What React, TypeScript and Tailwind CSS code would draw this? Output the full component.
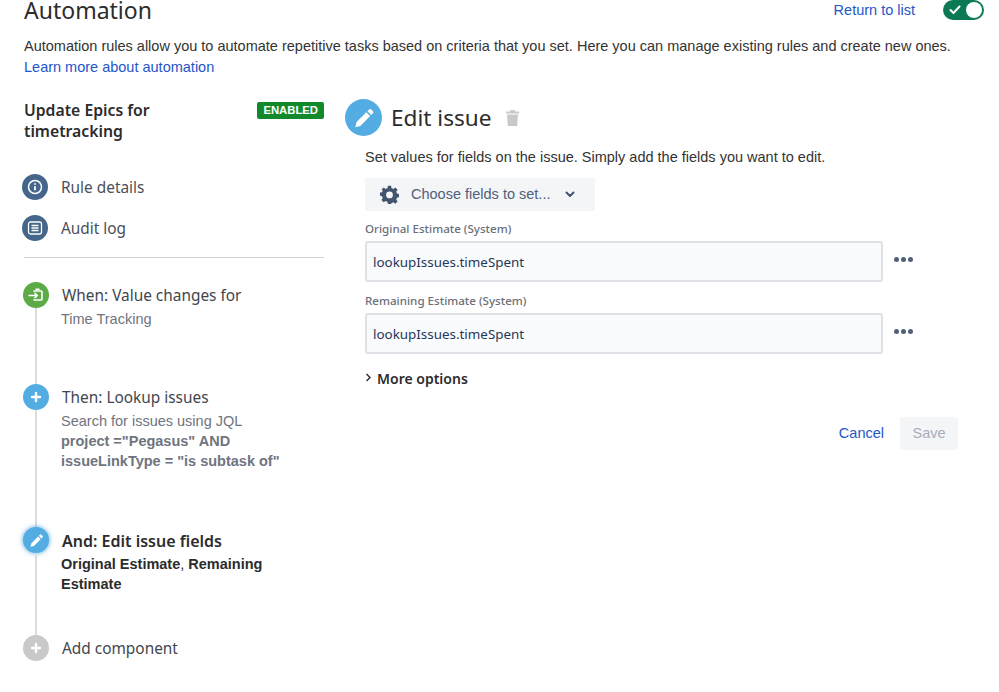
import React from "react";

const sans = "font-['Liberation_Sans',Arial,sans-serif]";
const head = "font-['Noto_Sans','Open_Sans',sans-serif]";

function Pencil({ size }: { size: number }) {
  return (
    <svg width={size} height={size} viewBox="0 0 24 24" fill="white">
      <path d="M17.6 2.6a1.6 1.6 0 0 1 2.2 0l2 2a1.6 1.6 0 0 1 0 2.2l-1.9 1.9-4.2-4.2zM14.5 5.7l4.2 4.2L8 20.6l-5.5 1.4L3.9 16.4z" />
    </svg>
  );
}

function Plus() {
  return (
    <svg width="12" height="12" viewBox="0 0 12 12" fill="none" stroke="white" strokeWidth="2.4" strokeLinecap="round">
      <path d="M6 2v8M2 6h8" />
    </svg>
  );
}

function Step({ color, icon, line, height, title, bold, children, glow }: { color: string; icon: React.ReactNode; line: boolean; height: string; title: string; bold?: boolean; children?: React.ReactNode; glow?: boolean }) {
  return (
    <div className={`flex ${height}`}>
      <div className="flex w-[26px] flex-col items-center">
        <div className={`flex h-[26px] w-[26px] shrink-0 items-center justify-center rounded-full ${color} ${glow ? "shadow-[0_0_5px_#4aa3df]" : ""}`}>{icon}</div>
        {line && <div className="w-[2px] flex-1 bg-[#dcdcdc]" />}
      </div>
      <div className="ml-[13px] min-w-0 flex-1">
        <div className={`${head} h-[26px] pt-[1px] leading-[26px] ${bold ? "text-[16px] font-semibold text-[#2c2c2c]" : "text-[15.4px] text-[#42464e]"}`}>{title}</div>
        {children && <div className={`${sans} -ml-[1px] mt-[1px] text-[14.5px] leading-[20px] text-[#6f7480]`}>{children}</div>}
      </div>
    </div>
  );
}

function Field({ label, top }: { label: string; top: string }) {
  return (
    <div className={top}>
      <div className={`${head} text-[11.6px] font-medium leading-[16px] text-[#6b6f78]`}>{label}</div>
      <div className="mt-[4px] flex items-center">
        <div className={`${head} flex h-[41px] w-[518px] items-center rounded-[3px] border-2 border-[#dfe1e6] bg-[#fafbfc] px-[6px] pt-[2px] text-[13.4px] text-[#253858]`}>lookupIssues.timeSpent</div>
        <div className="mb-[5px] ml-[11px] flex gap-[2px]">
          <span className="h-[5px] w-[5px] rounded-full bg-[#50607a]" />
          <span className="h-[5px] w-[5px] rounded-full bg-[#50607a]" />
          <span className="h-[5px] w-[5px] rounded-full bg-[#50607a]" />
        </div>
      </div>
    </div>
  );
}

function Side({ icon, label }: { icon: React.ReactNode; label: string }) {
  return (
    <div className="flex h-[26px] items-center">
      <div className="flex h-[26px] w-[26px] shrink-0 items-center justify-center rounded-full bg-[#45658a]">{icon}</div>
      <span className={`${head} ml-[13px] mt-[2px] text-[15.4px] text-[#4b4f57]`}>{label}</span>
    </div>
  );
}

export default function App() {
  return (
    <div className="h-[692px] w-[999px] overflow-hidden bg-white pl-[24px]">
      <div className="flex items-start">
        <h1 className={`${head} text-[23px] font-normal leading-[20px] text-[#2c2c2c]`}>Automation</h1>
        <a className={`${sans} ml-auto mt-[2px] text-[14.5px] leading-[16px] text-[#1f56c9]`}>Return to list</a>
        <div className="ml-[28px] mr-[15px] flex h-[20px] w-[41px] items-center justify-between rounded-full bg-[#0b7a54] pl-[6px] pr-[2px]">
          <svg width="12" height="10" viewBox="0 0 12 10" fill="none" stroke="white" strokeWidth="2" strokeLinecap="round" strokeLinejoin="round"><path d="M1.5 5l3 3 6-6.5" /></svg>
          <span className="h-[16px] w-[16px] rounded-full bg-white" />
        </div>
      </div>
      <p className={`${sans} mt-[16px] w-[960px] text-[14.5px] leading-[21px] text-[#333333]`}>
        Automation rules allow you to automate repetitive tasks based on criteria that you set. Here you can manage existing rules and create new ones.
        <br />
        <a className="text-[#1f56c9]">Learn more about automation</a>
      </p>
      <div className="mt-[22px] flex">
        <div className="w-[300px] shrink-0">
          <div className="flex items-start justify-between">
            <div className={`${head} w-[170px] text-[15.75px] font-semibold leading-[21px] text-[#2c2c2c]`}>Update Epics for timetracking</div>
            <span className={`${sans} mt-[2px] rounded-[2px] bg-[#128a2c] px-[6px] text-[11.3px] font-bold leading-[17px] text-white`}>ENABLED</span>
          </div>
          <div className="mt-[32px] -ml-[2px] flex flex-col gap-[15px]">
            <Side
              label="Rule details"
              icon={
                <svg width="16" height="16" viewBox="0 0 16 16" fill="none" stroke="white" strokeWidth="1.5">
                  <circle cx="8" cy="8" r="6.5" />
                  <path d="M8 7.2v4" strokeWidth="1.8" />
                  <path d="M8 4.2v1.6" strokeWidth="1.8" />
                </svg>
              }
            />
            <Side
              label="Audit log"
              icon={
                <svg width="16" height="16" viewBox="0 0 16 16" fill="none" stroke="white" strokeWidth="1.3">
                  <rect x="1.5" y="2" width="13" height="12" rx="2" />
                  <path d="M4.5 5.5h7M4.5 8h7M4.5 10.5h7" />
                </svg>
              }
            />
          </div>
          <hr className="mt-[16px] border-t border-[#d4d4d4]" />
          <div className="mt-[24px] -ml-[1px]">
            <Step
              color="bg-[#5cab47]"
              height="h-[102px]"
              line
              title="When: Value changes for"
              icon={
                <svg width="16" height="16" viewBox="0 0 16 16" fill="none" stroke="white" strokeWidth="1.6" strokeLinecap="round" strokeLinejoin="round">
                  <path d="M6 4h7a1 1 0 0 1 1 1v7a1 1 0 0 1-1 1H6M1 8.5h8M7 6.3L9.4 8.5 7 10.7M8 2.2h3" />
                </svg>
              }
            >
              Time Tracking
            </Step>
            <Step color="bg-[#54ade2]" height="h-[143px]" line title="Then: Lookup issues" icon={<Plus />}>
              Search for issues using JQL
              <br />
              <b>project ="Pegasus" AND</b>
              <br />
              <b>issueLinkType = "is subtask of"</b>
            </Step>
            <Step color="bg-[#54ade2]" height="h-[108px]" line glow bold title="And: Edit issue fields" icon={<Pencil size={15} />}>
              <span className="mt-[1px] block text-[#2c2c2c]">
                <b>Original Estimate</b>, <b>Remaining</b>
                <br />
                <b>Estimate</b>
              </span>
            </Step>
            <Step color="bg-[#c9c9c9]" height="h-[26px]" line={false} title="Add component" icon={<Plus />} />
          </div>
        </div>
        <div className="ml-[21px] flex-1">
          <div className="-mt-[1px] flex items-center">
            <div className="flex h-[37px] w-[37px] items-center justify-center rounded-full bg-[#54ade2]"><Pencil size={22} /></div>
            <h2 className={`${head} ml-[9px] text-[22.6px] font-normal leading-[37px] text-[#2c2c2c]`}>Edit issue</h2>
            <svg className="ml-[14px]" width="13" height="16" viewBox="0 0 13 16" fill="#c9c9c9">
              <path d="M4.5 0h4l.6 1.5H13V3.5H0V1.5h3.9zM1 4.5h11L11.2 16H1.8z" />
            </svg>
          </div>
          <div className="pl-[20px]">
            <p className={`${sans} mt-[11px] text-[14.5px] leading-[20px] text-[#333333]`}>Set values for fields on the issue. Simply add the fields you want to edit.</p>
            <div className={`${sans} mt-[11px] flex h-[33px] w-[230px] items-center rounded-[3px] bg-[#f4f5f7] pl-[15px] text-[14.5px] text-[#50607a]`}>
              <svg width="19" height="19" viewBox="0 0 24 24" fill="#44546f">
                <path fillRule="evenodd" d="M10 1h4l.6 3a8.5 8.5 0 0 1 2.2.9l2.6-1.7 2.8 2.8-1.7 2.6c.4.7.7 1.4.9 2.2l3 .6v4l-3 .6a8.5 8.5 0 0 1-.9 2.2l1.7 2.6-2.8 2.8-2.6-1.7a8.5 8.5 0 0 1-2.2.9L14 24h-4l-.6-3a8.5 8.5 0 0 1-2.2-.9l-2.6 1.7-2.8-2.8 1.7-2.6a8.5 8.5 0 0 1-.9-2.2l-3-.6v-4l3-.6c.2-.8.5-1.5.9-2.2L1.8 6l2.8-2.8 2.6 1.7a8.5 8.5 0 0 1 2.2-.9zM12 8.2a4.3 4.3 0 1 0 0 8.6 4.3 4.3 0 0 0 0-8.6z" />
              </svg>
              <span className="ml-[12px]">Choose fields to set...</span>
              <svg className="ml-[15px]" width="10" height="7" viewBox="0 0 10 7" fill="none" stroke="#44546f" strokeWidth="2" strokeLinecap="round" strokeLinejoin="round"><path d="M1.5 1.5L5 5l3.5-3.5" /></svg>
            </div>
            <Field top="mt-[10px]" label="Original Estimate (System)" />
            <Field top="mt-[11px]" label="Remaining Estimate (System)" />
            <div className={`${head} mt-[14px] flex items-center text-[14px] font-semibold leading-[22px] text-[#2c2c2c]`}>
              <svg className="mb-[3px]" width="7" height="9" viewBox="0 0 7 9" fill="none" stroke="#2c2c2c" strokeWidth="1.4"><path d="M1.5 1l3.5 3.5L1.5 8" /></svg>
              <span className="ml-[5px]">More options</span>
            </div>
            <div className={`${sans} mt-[27px] flex w-[593px] items-center justify-end text-[14.5px]`}>
              <a className="text-[#1f56c9]">Cancel</a>
              <span className="ml-[16px] flex h-[33px] w-[58px] items-center justify-center rounded-[3px] bg-[#f4f5f7] text-[#a5adba]">Save</span>
            </div>
          </div>
        </div>
      </div>
    </div>
  );
}
